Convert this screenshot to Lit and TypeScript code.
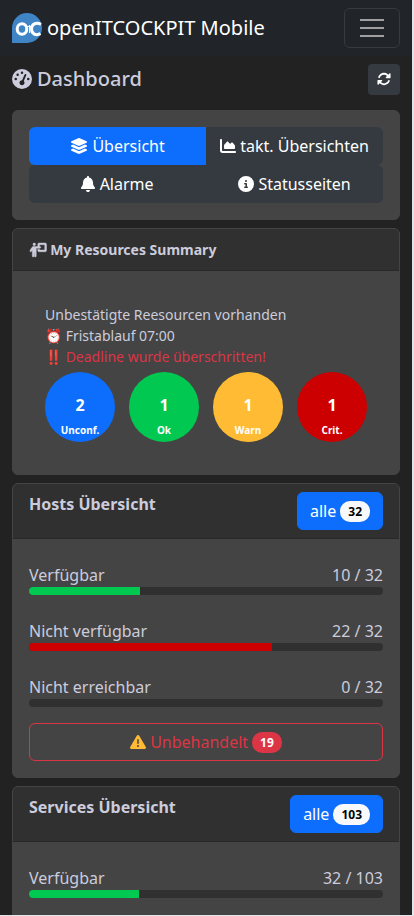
import { LitElement, html, css, svg } from "lit";
import { customElement } from "lit/decorators.js";
import { styleMap } from "lit/directives/style-map.js";
import { classMap } from "lit/directives/class-map.js";

const ICONS: Record<string, { w: number; d: string }> = {
  gauge: { w: 512, d: "M0 256a256 256 0 1 1 512 0A256 256 0 1 1 0 256zM288 96a32 32 0 1 0 -64 0 32 32 0 1 0 64 0zM256 416c35.3 0 64-28.7 64-64c0-17.4-6.9-33.1-18.1-44.6L366 161.7c5.3-12.1-.2-26.3-12.3-31.6s-26.3 .2-31.6 12.3L257.9 288c-.6 0-1.3 0-1.9 0c-35.3 0-64 28.7-64 64s28.7 64 64 64zM176 144a32 32 0 1 0 -64 0 32 32 0 1 0 64 0zM96 288a32 32 0 1 0 0-64 32 32 0 1 0 0 64zm352-32a32 32 0 1 0 -64 0 32 32 0 1 0 64 0z" },
  rotate: { w: 512, d: "M142.9 142.9c62.2-62.2 162.7-62.5 225.3-1L327 183c-6.9 6.9-8.9 17.2-5.2 26.2s12.5 14.8 22.2 14.8H463.5c0 0 0 0 0 0H472c13.3 0 24-10.7 24-24V72c0-9.7-5.8-18.5-14.8-22.2s-19.3-1.7-26.2 5.2L413.4 96.6c-87.6-86.5-228.7-86.2-315.8 1C73.2 122 55.6 150.7 44.8 181.4c-5.9 16.7 2.9 34.9 19.5 40.8s34.9-2.9 40.8-19.5c7.7-21.8 20.2-42.3 37.8-59.8zM16 312v7.6 .7V440c0 9.7 5.8 18.5 14.8 22.2s19.3 1.7 26.2-5.2l41.6-41.6c87.6 86.5 228.7 86.2 315.8-1c24.4-24.4 42.1-53.1 52.9-83.7c5.9-16.7-2.9-34.9-19.5-40.8s-34.9 2.9-40.8 19.5c-7.7 21.8-20.2 42.3-37.8 59.8c-62.2 62.2-162.7 62.5-225.3 1L185 329c6.9-6.9 8.9-17.2 5.2-26.2s-12.5-14.8-22.2-14.8H48.4h-.7H40c-13.3 0-24 10.7-24 24z" },
  layers: { w: 576, d: "M264.5 5.2c14.9-6.9 32.1-6.9 47 0l218.6 101c8.5 3.9 13.9 12.4 13.9 21.8s-5.4 17.9-13.9 21.8l-218.6 101c-14.9 6.9-32.1 6.9-47 0L45.9 149.8C37.4 145.8 32 137.3 32 128s5.4-17.9 13.9-21.8L264.5 5.2zM476.9 209.6l53.2 24.6c8.5 3.9 13.9 12.4 13.9 21.8s-5.4 17.9-13.9 21.8l-218.6 101c-14.9 6.9-32.1 6.9-47 0L45.9 277.8C37.4 273.8 32 265.3 32 256s5.4-17.9 13.9-21.8l53.2-24.6 152 70.2c23.4 10.8 50.4 10.8 73.8 0l152-70.2zm-152 198.2l152-70.2 53.2 24.6c8.5 3.9 13.9 12.4 13.9 21.8s-5.4 17.9-13.9 21.8l-218.6 101c-14.9 6.9-32.1 6.9-47 0L45.9 405.8C37.4 401.8 32 393.3 32 384s5.4-17.9 13.9-21.8l53.2-24.6 152 70.2c23.4 10.8 50.4 10.8 73.8 0z" },
  chart: { w: 512, d: "M64 64c0-17.7-14.3-32-32-32S0 46.3 0 64V400c0 44.2 35.8 80 80 80H480c17.7 0 32-14.3 32-32s-14.3-32-32-32H80c-8.8 0-16-7.2-16-16V64zm96 288H448c17.7 0 32-14.3 32-32V251.8c0-7.6-2.7-15-7.7-20.8l-65.8-76.8c-12.1-14.2-33.7-15-46.9-1.8l-21 21c-10 10-26.4 9.2-35.4-1.6l-39.2-47c-12.6-15.1-35.7-15.4-48.7-.6L135.9 215c-5.1 5.8-7.9 13.3-7.9 21.1v84c0 17.7 14.3 32 32 32z" },
  bell: { w: 448, d: "M224 0c-17.7 0-32 14.3-32 32V51.2C119 66 64 130.6 64 208v18.8c0 47-17.3 92.4-48.5 127.6l-7.4 8.3c-8.4 9.4-10.4 22.9-5.3 34.4S19.4 416 32 416H416c12.6 0 24-7.4 29.2-18.9s3.1-25-5.3-34.4l-7.4-8.3C401.3 319.2 384 273.9 384 226.8V208c0-77.4-55-142-128-156.8V32c0-17.7-14.3-32-32-32zm45.3 493.3c12-12 18.7-28.3 18.7-45.3H224 160c0 17 6.7 33.3 18.7 45.3s28.3 18.7 45.3 18.7s33.3-6.7 45.3-18.7z" },
  info: { w: 512, d: "M256 512A256 256 0 1 0 256 0a256 256 0 1 0 0 512zM216 336h24V272H216c-13.3 0-24-10.7-24-24s10.7-24 24-24h48c13.3 0 24 10.7 24 24v88h8c13.3 0 24 10.7 24 24s-10.7 24-24 24H216c-13.3 0-24-10.7-24-24s10.7-24 24-24zm40-208a32 32 0 1 1 0 64 32 32 0 1 1 0-64z" },
  warning: { w: 512, d: "M256 32c14.2 0 27.3 7.5 34.5 19.8l216 368c7.3 12.4 7.3 27.7 .2 40.1S486.3 480 472 480H40c-14.3 0-27.6-7.7-34.7-20.1s-7-27.8 .2-40.1l216-368C228.7 39.5 241.8 32 256 32zm0 128c-13.3 0-24 10.7-24 24V296c0 13.3 10.7 24 24 24s24-10.7 24-24V184c0-13.3-10.7-24-24-24zm32 224a32 32 0 1 0 -64 0 32 32 0 1 0 64 0z" },
  board: { w: 640, d: "M192 96a48 48 0 1 0 0-96 48 48 0 1 0 0 96zm-8 384V352h16V480c0 17.7 14.3 32 32 32s32-14.3 32-32V192h56 64 16c17.7 0 32-14.3 32-32s-14.3-32-32-32H384V64H576V256H384V224H320v48c0 26.5 21.5 48 48 48H592c26.5 0 48-21.5 48-48V48c0-26.5-21.5-48-48-48H368c-26.5 0-48 21.5-48 48v80H243.1 177.1c-33.7 0-64.9 17.7-82.3 46.6l-58.3 97c-9.1 15.1-4.2 34.8 10.9 43.9s34.8 4.2 43.9-10.9L120 256.9V480c0 17.7 14.3 32 32 32s32-14.3 32-32z" },
};

const icon = (name: string, cls = "") => html`<svg
  class="icon ${cls}" viewBox="0 0 ${ICONS[name].w} 512" aria-hidden="true">${svg`<path d=${ICONS[name].d} />`}</svg>`;

interface Row { label: string; value: number; total: number; tone: string }

@customElement("app-root")
export class AppRoot extends LitElement {
  static styles = css`
    * { box-sizing: border-box; }
    :host {
      display: block;
      box-sizing: border-box;
      height: 100vh;
      overflow: auto;
      scrollbar-width: none;
      background: #222222;
      color: #ccccdc;
      border-right: 2px solid #e1e5ea;
      border-bottom: 1px solid #e1e5ea;
      font: 16px/24px "Noto Sans", "Liberation Sans", sans-serif;
    }
    button, a { font: inherit; color: inherit; text-decoration: none; }
    button { cursor: pointer; margin: 0; }
    h1, h2, p { margin: 0; }
    .icon { height: 1em; width: auto; fill: currentColor; vertical-align: -2px; overflow: visible; }
    .navbar {
      display: flex; align-items: center; justify-content: space-between;
      padding: 8px 12px; background: #212529;
    }
    .brand { display: flex; align-items: center; gap: 5px; color: #ffffff; font-size: 20px; }
    .logo { width: 30px; height: 30px; }
    .toggler {
      display: grid; place-items: center; width: 56px; height: 40px; padding: 0;
      background: none; border: 1px solid #373b3e; border-radius: 6px;
    }
    .bars { width: 30px; height: 30px; stroke: #a0a0a0; stroke-width: 2; }
    main { display: flex; flex-direction: column; gap: 8px; padding: 8px 12px; }
    .title-bar { display: flex; justify-content: space-between; padding-bottom: 7px; }
    .page-title { display: flex; align-items: center; gap: 5px; height: 30px; font-size: 20px; font-weight: 500; }
    .refresh {
      display: grid; place-items: center; width: 32px; height: 31px; padding: 0 0 2px;
      font-size: 14px; color: #ffffff; background: #343a40; border: 0; border-radius: 4px;
    }
    .card { background: #444444; border: 1px solid #444444; border-radius: 6px; }
    .nav-card { padding: 16px; }
    .tabs { display: grid; grid-template-columns: 1fr 1fr; }
    .tab {
      height: 38px; padding: 0; border: 0; background: #343a40; color: #ffffff; white-space: nowrap;
      border-radius: 0 6px 6px 0;
    }
    .tab:nth-child(odd) { border-radius: 6px 0 0 6px; }
    .tab.active { background: #0d6efd; }
    .head {
      display: flex; justify-content: space-between; align-items: flex-start;
      padding: 8px 16px; background: #303030; border-bottom: 1px solid #282828; border-radius: 5px 5px 0 0;
    }
    .head h2 { font-size: 16px; font-weight: 700; }
    .head .small { font-size: 14px; line-height: 25px; }
    .small .icon { stroke: currentColor; stroke-width: 16; }
    .summary { padding: 33px 32px 32px; font-size: 14px; line-height: 21px; }
    .late { color: #dc3545; }
    .circles { display: flex; flex-wrap: wrap; gap: 14px; padding-top: 5px; }
    .circle {
      display: flex; flex-direction: column; align-items: center; justify-content: flex-end;
      width: 70px; height: 70px; padding-bottom: 4px; border-radius: 50%;
      color: #ffffff; font-weight: 700; font-size: 10px; line-height: 16px;
    }
    .count { font-size: 16px; line-height: 24px; padding-bottom: 5px; }
    .blue { background: #0d6efd; }
    .green { background: #00c851; }
    .amber { background: #ffbb33; }
    .red { background: #cc0000; }
    .btn {
      display: flex; align-items: center; justify-content: center; gap: 4px; height: 38px;
      padding: 0 12px; border: 1px solid #0d6efd; border-radius: 6px; background: #0d6efd; color: #ffffff;
    }
    .btn.outline { border-color: #dc3545; background: none; color: #dc3545; }
    .badge {
      padding: 4px 8px; border-radius: 10px; font-size: 12px; font-weight: 700; line-height: 13px;
      background: #f8f9fa; color: #000000;
    }
    .outline .badge { background: #dc3545; color: #ffffff; }
    .warn { color: #ffbb33; }
    .body { display: flex; flex-direction: column; padding: 24px 16px 16px; }
    .rows { display: flex; flex-direction: column; gap: 24px; padding-bottom: 16px; }
    .labels { display: flex; justify-content: space-between; }
    .track { height: 8px; border-radius: 4px; overflow: hidden; background: #303030; }
    .fill { height: 100%; }
  `;

  private hosts: Row[] = [
    { label: "Verfügbar", value: 10, total: 32, tone: "green" },
    { label: "Nicht verfügbar", value: 22, total: 32, tone: "red" },
    { label: "Nicht erreichbar", value: 0, total: 32, tone: "red" },
  ];

  private services: Row[] = [{ label: "Verfügbar", value: 32, total: 103, tone: "green" }];

  private tabs = [
    { icon: "layers", label: "Übersicht", active: true },
    { icon: "chart", label: "takt. Übersichten", active: false },
    { icon: "bell", label: "Alarme", active: false },
    { icon: "info", label: "Statusseiten", active: false },
  ];

  private circles = [
    { count: 2, label: "Unconf.", tone: "blue" },
    { count: 1, label: "Ok", tone: "green" },
    { count: 1, label: "Warn", tone: "amber" },
    { count: 1, label: "Crit.", tone: "red" },
  ];

  private renderCard(title: string, total: number, rows: Row[], unhandled = 0) {
    return html`<section class="card">
      <header class="head">
        <h2>${title}</h2>
        <button class="btn">alle <span class="badge">${total}</span></button>
      </header>
      <div class="body">
        <div class="rows">
          ${rows.map((r) => html`<div>
            <div class="labels"><span>${r.label}</span><span>${r.value} / ${r.total}</span></div>
            <div class="track"><div class="fill ${r.tone}" style=${styleMap({ width: `${(r.value / r.total) * 100}%` })}></div></div>
          </div>`)}
        </div>
        ${unhandled
          ? html`<button class="btn outline">${icon("warning", "warn")} Unbehandelt <span class="badge">${unhandled}</span></button>`
          : ""}
      </div>
    </section>`;
  }

  render() {
    return html`
      <nav class="navbar">
        <a class="brand" href="#">
          <svg class="logo" viewBox="0 0 30 30" aria-hidden="true">
            <path fill="#3f85c6" d="M15 0a15 15 0 0 1 0 30H0V15A15 15 0 0 1 15 0z" />
            <g fill="none" stroke="#ffffff" stroke-width="3">
              <ellipse cx="10" cy="16" rx="4.800" ry="5.200" />
              <path d="M29 11.300C24 9 19.500 11 19.500 16s4.500 7 9 4.700" />
            </g>
            <path stroke="#ffffff" stroke-width="1" d="M15 13.500h6M17.500 12v8" />
          </svg>
          <span>openITCOCKPIT Mobile</span>
        </a>
        <button class="toggler" aria-label="Menü">
          <svg class="bars" viewBox="0 0 30 30" aria-hidden="true"><path d="M3 7h24M3 15h24M3 23h24" /></svg>
        </button>
      </nav>
      <main>
        <div class="title-bar">
          <h1 class="page-title">${icon("gauge")}<span>Dashboard</span></h1>
          <button class="refresh" aria-label="Aktualisieren">${icon("rotate")}</button>
        </div>
        <div class="card nav-card">
          <div class="tabs">
            ${this.tabs.map((t) => html`<button class=${classMap({ tab: true, active: t.active })}>${icon(t.icon)} ${t.label}</button>`)}
          </div>
        </div>
        <section class="card">
          <header class="head"><h2 class="small">${icon("board")} My Resources Summary</h2></header>
          <div class="summary">
            <p>Unbestätigte Reesourcen vorhanden</p>
            <p>⏰ Fristablauf 07:00</p>
            <p class="late">‼️ Deadline wurde überschritten!</p>
            <div class="circles">
              ${this.circles.map((c) => html`<div class="circle ${c.tone}"><span class="count">${c.count}</span><span>${c.label}</span></div>`)}
            </div>
          </div>
        </section>
        ${this.renderCard("Hosts Übersicht", 32, this.hosts, 19)}
        ${this.renderCard("Services Übersicht", 103, this.services)}
      </main>
    `;
  }
}
